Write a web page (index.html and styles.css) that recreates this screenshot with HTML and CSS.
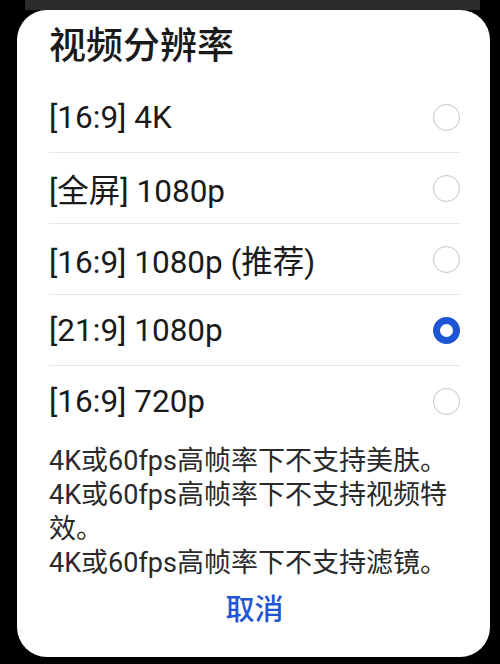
FILE: index.html
```html
<!DOCTYPE html>
<html lang="zh-CN">
<head>
    <meta charset="UTF-8">
    <meta name="viewport" content="width=device-width, initial-scale=1.0">
    <title>视频分辨率</title>
    <link rel="stylesheet" href="styles.css">
</head>
<body>
    <div class="top-strip"></div>
    <div class="dialog">
        <div class="title">视频分辨率</div>
        <div class="options">
            <div class="option">
                <span class="option-label">[16:9] 4K</span>
                <span class="radio"></span>
            </div>
            <div class="option">
                <span class="option-label">[全屏] 1080p</span>
                <span class="radio"></span>
            </div>
            <div class="option">
                <span class="option-label">[16:9] 1080p (推荐)</span>
                <span class="radio"></span>
            </div>
            <div class="option">
                <span class="option-label">[21:9] 1080p</span>
                <span class="radio checked"></span>
            </div>
            <div class="option">
                <span class="option-label">[16:9] 720p</span>
                <span class="radio"></span>
            </div>
        </div>
        <div class="notes">
            <p>4K或60fps高帧率下不支持美肤。</p>
            <p>4K或60fps高帧率下不支持视频特效。</p>
            <p>4K或60fps高帧率下不支持滤镜。</p>
        </div>
        <div class="cancel">取消</div>
    </div>
</body>
</html>
```

FILE: styles.css
```css
body {
    margin: 0;
    background-color: #000;
    font-family: Roboto, "Noto Sans CJK SC", sans-serif;
    color: #1a1a1a;
}
.top-strip {
    height: 10px;
    margin: 0 20px 0 25px;
    background-color: #2b2b2b;
}
.dialog {
    box-sizing: border-box;
    width: 473px;
    height: 647px;
    margin-left: 17px;
    padding: 15px 30px 0 32px;
    background-color: #fff;
    border-radius: 30px;
}
.title {
    font-size: 37px;
    line-height: 44px;
    font-weight: 500;
    margin-bottom: 13px;
}
.option {
    box-sizing: border-box;
    height: 71px;
    display: flex;
    align-items: center;
    justify-content: space-between;
    border-bottom: 1px solid #e8e8e8;
}
.option:last-child {
    border-bottom: none;
}
.option-label {
    font-size: 31.5px;
}
.radio {
    box-sizing: border-box;
    width: 27px;
    height: 27px;
    border: 1.5px solid #c2c2c2;
    border-radius: 50%;
}
.radio.checked {
    border: 7.5px solid #1d55d3;
}
.notes {
    margin-top: 7px;
    font-size: 27px;
    line-height: 34px;
    color: #2a2a2a;
}
.notes p {
    margin: 0;
}
.cancel {
    margin-top: 10px;
    text-align: center;
    font-size: 29px;
    line-height: 40px;
    font-weight: 500;
    color: #1f56d2;
}
```
